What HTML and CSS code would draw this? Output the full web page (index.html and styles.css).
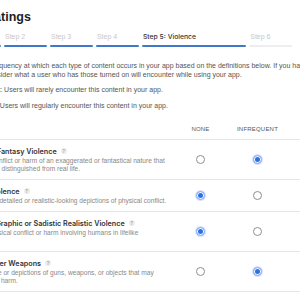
FILE: index.html
```html
<!DOCTYPE html>
<html lang="en">

<head>
    <meta charset="UTF-8">
    <meta name="viewport" content="width=device-width, initial-scale=1.0">
    <title>Age Ratings</title>
    <link rel="stylesheet" href="styles.css">
</head>

<body>
    <div class="page">
        <h1>Age Ratings</h1>

        <div class="steps">
            <div class="step done"><span>Step 1</span></div>
            <div class="step done"><span>Step 2</span></div>
            <div class="step done"><span>Step 3</span></div>
            <div class="step done"><span>Step 4</span></div>
            <div class="step current"><span>Step 5: Violence</span></div>
            <div class="step"><span>Step 6</span></div>
        </div>

        <p class="intro">
            Select the frequency at which each type of content occurs in your app based on the definitions below. If you have parental controls<br>
            settings, consider what a user who has those turned on will encounter while using your app.
        </p>

        <ul class="levels">
            <li><b>Infrequent</b>: Users will rarely encounter this content in your app.</li>
            <li class="second"><b>Frequent</b>: Users will regularly encounter this content in your app.</li>
        </ul>

        <div class="table">
            <div class="row head">
                <div></div>
                <div class="col">None</div>
                <div class="col">Infrequent</div>
                <div class="col">Frequent</div>
            </div>

            <div class="row">
                <div class="info">
                    <div class="name">Cartoon or Fantasy Violence <span class="help">?</span></div>
                    <div class="desc">Displays of conflict or harm of an exaggerated or fantastical nature that<br>can be quickly distinguished from real life.</div>
                </div>
                <div class="cell"><span class="radio"></span></div>
                <div class="cell"><span class="radio on"></span></div>
                <div class="cell"><span class="radio"></span></div>
            </div>

            <div class="row">
                <div class="info">
                    <div class="name">Realistic Violence <span class="help">?</span></div>
                    <div class="desc">Scenes using detailed or realistic-looking depictions of physical conflict.</div>
                </div>
                <div class="cell"><span class="radio on"></span></div>
                <div class="cell"><span class="radio"></span></div>
                <div class="cell"><span class="radio"></span></div>
            </div>

            <div class="row">
                <div class="info">
                    <div class="name">Prolonged Graphic or Sadistic Realistic Violence <span class="help">?</span></div>
                    <div class="desc">Extended physical conflict or harm involving humans in lifelike<br>detail.</div>
                </div>
                <div class="cell"><span class="radio on"></span></div>
                <div class="cell"><span class="radio"></span></div>
                <div class="cell"><span class="radio"></span></div>
            </div>

            <div class="row">
                <div class="info">
                    <div class="name">Guns or Other Weapons <span class="help">?</span></div>
                    <div class="desc">Its realistic use or depictions of guns, weapons, or objects that may<br>used to cause harm.</div>
                </div>
                <div class="cell"><span class="radio"></span></div>
                <div class="cell"><span class="radio on"></span></div>
                <div class="cell"><span class="radio"></span></div>
            </div>
        </div>
    </div>
</body>

</html>
```

FILE: styles.css
```css
* {
    margin: 0;
    padding: 0;
    box-sizing: border-box;
}

body {
    font-family: 'Liberation Sans', 'Helvetica', sans-serif;
    background: white;
    color: #333;
    overflow: hidden;
}

.page {
    margin-left: -42px;
    width: 440px;
}

h1 {
    margin-top: 10px;
    font-size: 12.5px;
    line-height: 15px;
    font-weight: bold;
    color: #1d1d1f;
}

/* step indicator */
.steps {
    display: flex;
    gap: 3.3px;
    margin-top: 7px;
}

.step {
    flex: 0 0 42.7px;
    display: flex;
    flex-direction: column;
}

.step span {
    font-size: 7px;
    line-height: 9px;
    color: #c8c8c8;
    padding-left: 1px;
    white-space: nowrap;
}

.step::after {
    content: '';
    height: 2px;
    margin-top: 4px;
    border-radius: 1px;
    background: #eeeeee;
}

.step.done::after,
.step.current::after {
    background: #3f78c9;
}

.step.current {
    flex-basis: 104px;
}

.step.current span {
    font-family: 'Inter', sans-serif;
    font-weight: 500;
    font-size: 6.8px;
    color: #333;
}

/* intro text */
.intro {
    margin-top: 14px;
    font-size: 7px;
    line-height: 9.3px;
    color: #555;
    white-space: nowrap;
}

.levels {
    list-style: none;
    font-size: 7px;
    line-height: 9.3px;
    color: #555;
    padding-left: 8px;
    margin-top: 5px;
}

.levels li.second {
    margin-top: 7px;
}

.levels b {
    color: #333;
}

/* ratings table */
.table {
    margin-top: 15px;
}

.row {
    display: grid;
    grid-template-columns: 214px 57px 57px 90px;
    border-bottom: 1px solid #e6e6e6;
}

.row.head .col {
    text-align: center;
    font-size: 6px;
    line-height: 8px;
    text-transform: uppercase;
    letter-spacing: 0.2px;
    color: #555;
    padding-bottom: 5.5px;
}

.info {
    padding: 7px 0 6px;
}

.name {
    font-family: 'Inter', sans-serif;
    font-size: 7.2px;
    line-height: 9px;
    font-weight: 600;
    color: #333;
    white-space: nowrap;
    display: flex;
    align-items: center;
    gap: 4px;
}

.help {
    display: inline-flex;
    width: 6px;
    height: 6px;
    border-radius: 50%;
    background: #ececec;
    color: #a8a8a8;
    font-size: 5px;
    line-height: 6px;
    justify-content: center;
}

.desc {
    margin-top: 1px;
    font-size: 6.6px;
    line-height: 8px;
    color: #888;
    white-space: nowrap;
}

.cell {
    display: flex;
    justify-content: center;
    align-items: center;
}

.radio {
    width: 9px;
    height: 9px;
    border-radius: 50%;
    border: 1px solid #8e8e8e;
    background: white;
}

.radio.on {
    border-color: #9dbdf5;
    background: #2f6fe6;
    box-shadow: inset 0 0 0 1px white, 0 0 0 1px #d6e4fb;
}
```
